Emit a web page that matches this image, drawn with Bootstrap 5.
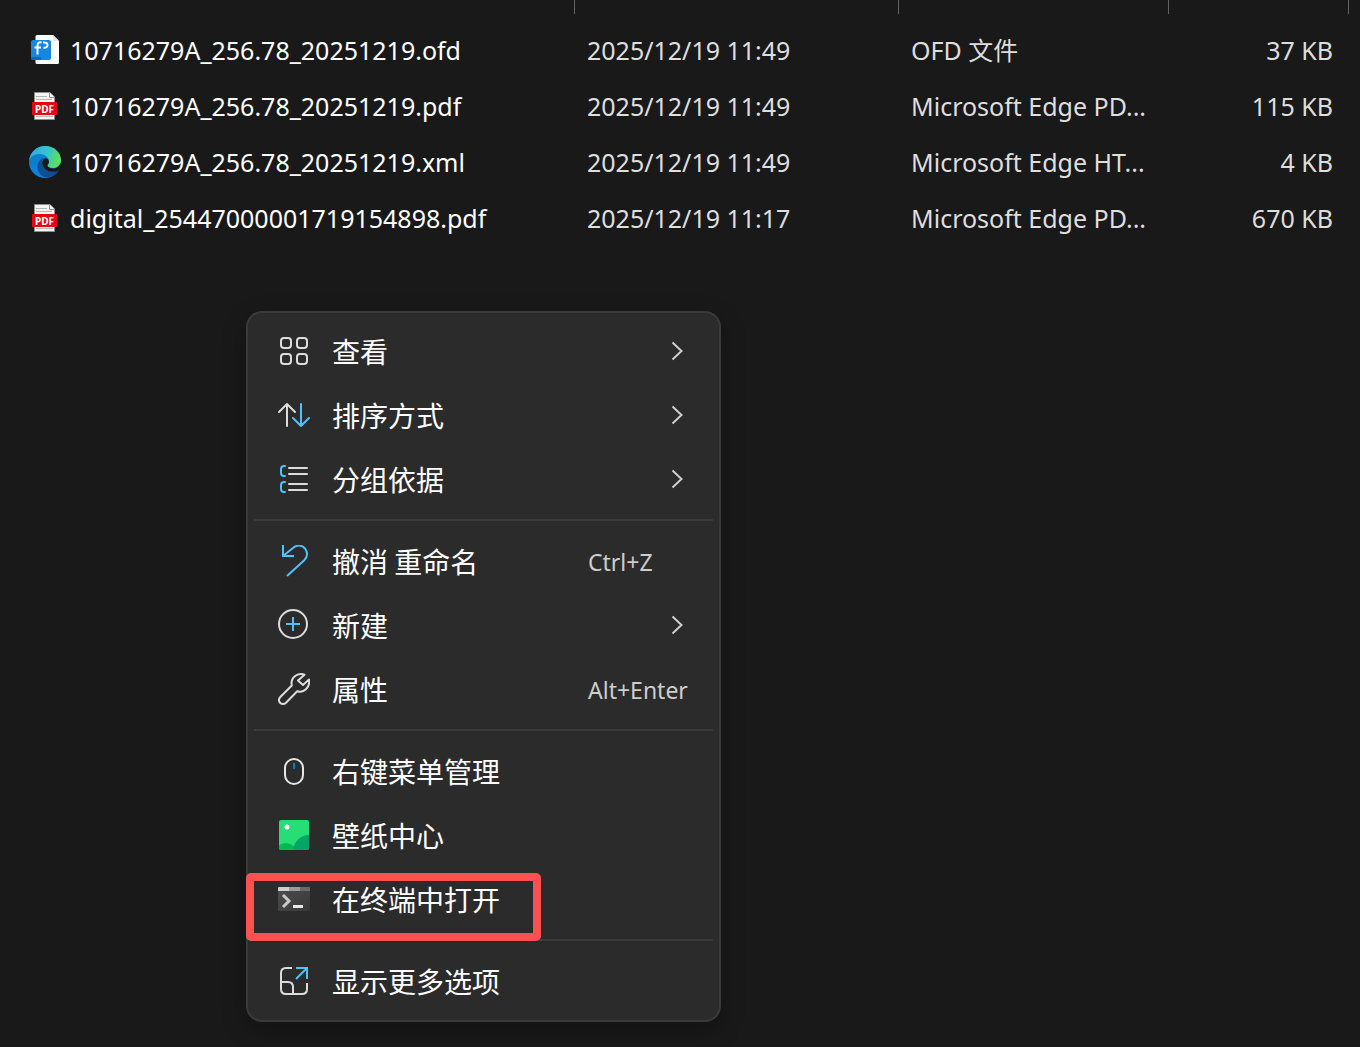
<!DOCTYPE html>
<html lang="zh-CN" data-bs-theme="dark">
<head>
<meta charset="utf-8">
<meta name="viewport" content="width=device-width, initial-scale=1">
<title>文件资源管理器</title>
<link href="https://cdn.jsdelivr.net/npm/bootstrap@5.3.0/dist/css/bootstrap.min.css" rel="stylesheet">
<style>
  body {
    background: #191919;
    color: #fff;
    font-family: "Noto Sans", "Noto Sans CJK SC", sans-serif;
    min-height: 100vh;
  }
  /* File list */
  .file-list { table-layout: fixed; font-size: 25px; line-height: 32px; color: #dedede; }
  .file-list th { height: 22px; padding: 0; vertical-align: top; }
  .file-list th .divider { display: block; height: 14px; border-right: 1px solid #636363; }
  .file-list td { height: 56px; padding: 0 16px 0 12px; vertical-align: middle; }
  .file-list td:first-child { padding-left: 28px; color: #fff; }
  .col-date { width: 324px; }
  .col-type { width: 270px; }
  .col-size { width: 180px; }
  .col-rest { width: 11px; }
  .file-icon { width: 34px; height: 34px; flex: none; }

  /* Context menu */
  .context-menu {
    left: 246px;
    top: 311px;
    width: 475px;
    padding: 6px 6px 7px;
    background: #2b2b2b;
    border: 2px solid #3a3a3a;
    border-radius: 16px;
    box-shadow: 0 8px 24px rgba(0, 0, 0, .28);
  }
  .menu-entry {
    display: grid;
    grid-template-columns: 32px 1fr 125px;
    column-gap: 22px;
    align-items: center;
    width: 100%;
    height: 64px;
    padding: 0 0 0 24px;
    border: 0;
    background: transparent;
    color: #fff;
    font-family: "Noto Sans CJK SC", "Noto Sans", sans-serif;
    font-size: 28px;
    line-height: 40px;
    text-align: left;
    white-space: nowrap;
  }
  .menu-entry svg { display: block; }
  .menu-entry:hover { background: #353535; }
  .menu-line { height: 2px; margin: 8px 0; background: #3b3b3b; }
  .shortcut { padding-top: 2px; font-family: "Noto Sans", sans-serif; font-size: 23px; color: #cdcdcd; }
  .chevron { margin-left: 83px; }
  .highlight-frame {
    left: -8px;
    top: 6px;
    width: 295px;
    height: 68px;
    border: 8px solid #fa5151;
    border-radius: 5px;
    pointer-events: none;
  }
</style>
</head>
<body>

<svg width="0" height="0" class="position-absolute" aria-hidden="true">
  <defs>
    <linearGradient id="edgeTop" x1="0" y1="0.3" x2="1" y2="0.6">
      <stop offset="0" stop-color="#2fa8e6"/><stop offset=".5" stop-color="#31c6cf"/><stop offset="1" stop-color="#66e04e"/>
    </linearGradient>
    <linearGradient id="edgeLeft" x1="0" y1="0" x2=".4" y2="1">
      <stop offset="0" stop-color="#1277c4"/><stop offset="1" stop-color="#0a84e0"/>
    </linearGradient>
    <linearGradient id="edgeDark" x1="0" y1="0" x2="1" y2=".5">
      <stop offset="0" stop-color="#0c5296"/><stop offset="1" stop-color="#134b93"/>
    </linearGradient>
    <linearGradient id="termBody" x1="0" y1="0" x2="1" y2="1">
      <stop offset="0" stop-color="#4e4e4e"/><stop offset="1" stop-color="#383838"/>
    </linearGradient>
    <symbol id="pdf" viewBox="0 0 34 34">
      <path d="M6.5 3.5H22L26.500 8V30.500H6.500Z" fill="#f4f4f4" stroke="#8f8f8f"/>
      <path d="M21.500 3.500V8.500H26.500" fill="#fff" stroke="#8f8f8f"/>
      <path d="M8 7.500H19M8 10.500H24M8 27.500H25" stroke="#b5b5b5"/>
      <rect x="4" y="13" width="25" height="13" fill="#e00713"/>
      <text x="16.500" y="23.500" text-anchor="middle" font-family="Noto Sans, sans-serif" font-size="10" font-weight="700" fill="#fff">PDF</text>
    </symbol>
    <symbol id="chev" viewBox="0 0 14 20">
      <path d="M1.500 1.500L10.500 10L1.500 18.500" fill="none" stroke="#cfcfcf" stroke-width="2"/>
    </symbol>
  </defs>
</svg>

<main>
  <table class="file-list w-100">
    <colgroup><col><col class="col-date"><col class="col-type"><col class="col-size"><col class="col-rest"></colgroup>
    <thead>
      <tr>
        <th scope="col" aria-label="名称"><span class="divider"></span></th>
        <th scope="col" aria-label="修改日期"><span class="divider"></span></th>
        <th scope="col" aria-label="类型"><span class="divider"></span></th>
        <th scope="col" aria-label="大小"><span class="divider"></span></th>
        <th></th>
      </tr>
    </thead>
    <tbody>
      <tr>
        <td><div class="d-flex align-items-center gap-2">
          <svg class="file-icon" viewBox="0 0 34 34" aria-hidden="true">
            <path d="M9 2H25L31 8V29.500Q31 31 29.500 31H9Q7.500 31 7.500 29.500V3.500Q7.500 2 9 2Z" fill="#fff"/>
            <path d="M25 2L31 8H26Q25 8 25 7Z" fill="#e4e8ee"/>
            <rect x="3" y="7" width="20" height="20" rx="2" fill="#1687e0"/>
            <path d="M3 24H13V27H5Q3 27 3 25Z" fill="#0b6cbf"/>
            <path d="M13.500 9.500Q9.500 8.500 9.500 13V21.500M6.500 14.500H13M15 9.500Q19.500 9 19.500 12Q19.500 15 15.500 14.800" fill="none" stroke="#fff" stroke-width="2"/>
          </svg>
          <span class="text-nowrap">10716279A_256.78_20251219.ofd</span></div></td>
        <td class="text-nowrap">2025/12/19 11:49</td>
        <td class="text-truncate">OFD 文件</td>
        <td class="text-end">37 KB</td><td class="p-0"></td>
      </tr>
      <tr>
        <td><div class="d-flex align-items-center gap-2">
          <svg class="file-icon" aria-hidden="true"><use href="#pdf"/></svg>
          <span class="text-nowrap">10716279A_256.78_20251219.pdf</span></div></td>
        <td class="text-nowrap">2025/12/19 11:49</td>
        <td class="text-truncate">Microsoft Edge PD...</td>
        <td class="text-end">115 KB</td><td class="p-0"></td>
      </tr>
      <tr>
        <td><div class="d-flex align-items-center gap-2">
          <svg class="file-icon" viewBox="0 0 34 34" aria-hidden="true">
            <circle cx="17" cy="17" r="16" fill="url(#edgeLeft)"/>
            <path d="M1 16C2 7 9 1 17 1C27 1 33 8 33 15C33 20 29 23 25 23C22 23 19.500 22 19.500 20.500C19.500 19.500 21 18.500 21 16.500C21 12 16.500 9 11.500 9C6 9 2 12 1 16Z" fill="url(#edgeTop)"/>
            <path d="M15 13C11 15 9.500 18.500 9.500 21.500C9.500 27 13 32 19.500 32.800C24 32 28.500 29 31 25.500C31.300 24.800 30.800 24.500 30 24.900C28 26 26 26.500 24 26.500C18.500 26.500 14 22.500 14 18C14 16 14.500 14.200 16 13Z" fill="url(#edgeDark)"/>
            <path d="M31 25.200C27 28 18.500 27.500 15 21.500C13.500 18.500 14 15 17 13.300C19.500 13.300 21 15 21 16.800C21 18.500 19.500 19.500 19.500 20.600C19.500 22 22 23.500 25 23.500C28 23.500 31 22 32.500 18L34 24Z" fill="#191919"/>
          </svg>
          <span class="text-nowrap">10716279A_256.78_20251219.xml</span></div></td>
        <td class="text-nowrap">2025/12/19 11:49</td>
        <td class="text-truncate">Microsoft Edge HT...</td>
        <td class="text-end">4 KB</td><td class="p-0"></td>
      </tr>
      <tr>
        <td><div class="d-flex align-items-center gap-2">
          <svg class="file-icon" aria-hidden="true"><use href="#pdf"/></svg>
          <span class="text-nowrap">digital_25447000001719154898.pdf</span></div></td>
        <td class="text-nowrap">2025/12/19 11:17</td>
        <td class="text-truncate">Microsoft Edge PD...</td>
        <td class="text-end">670 KB</td><td class="p-0"></td>
      </tr>
    </tbody>
  </table>
</main>

<nav class="context-menu position-absolute" aria-label="右键菜单">
  <button type="button" class="menu-entry">
    <svg width="32" height="32" viewBox="0 0 32 32" fill="none" stroke="#dcdcdc" stroke-width="2"><rect x="3" y="3" width="10" height="10" rx="3"/><rect x="19" y="3" width="10" height="10" rx="3"/><rect x="3" y="19" width="10" height="10" rx="3"/><rect x="19" y="19" width="10" height="10" rx="3"/></svg>
    <span>查看</span>
    <svg class="chevron" width="14" height="20"><use href="#chev"/></svg>
  </button>
  <button type="button" class="menu-entry">
    <svg width="32" height="32" viewBox="0 0 32 32" fill="none" stroke-width="2" stroke-linecap="round" stroke-linejoin="round"><path d="M9 27V5M1 13L9 5L17 13" stroke="#dcdcdc"/><path d="M16 18L23 27L31 19" stroke="#2b2b2b" stroke-width="5"/><path d="M23 5V27M15 19L23 27L31 19" stroke="#4cc2ff"/></svg>
    <span>排序方式</span>
    <svg class="chevron" width="14" height="20"><use href="#chev"/></svg>
  </button>
  <button type="button" class="menu-entry">
    <svg width="32" height="32" viewBox="0 0 32 32" fill="none" stroke-width="2" stroke-linecap="round"><path d="M7 3H6Q3 3 3 6V10Q3 13 6 13H7M7 19H6Q3 19 3 22V26Q3 29 6 29H7" stroke="#4cc2ff"/><path d="M11 5H29M11 11H29M11 21H29M11 27H29" stroke="#dcdcdc"/></svg>
    <span>分组依据</span>
    <svg class="chevron" width="14" height="20"><use href="#chev"/></svg>
  </button>
  <div class="menu-line"></div>
  <button type="button" class="menu-entry">
    <svg width="32" height="32" viewBox="0 0 32 32" fill="none" stroke="#4cc2ff" stroke-width="2"><path d="M5 0V11H16M5 11L15 3C19 -.5 24 0 27 3.500C30 7.500 29.500 12 26 15.500L9 31"/></svg>
    <span>撤消 重命名</span>
    <span class="shortcut">Ctrl+Z</span>
  </button>
  <button type="button" class="menu-entry">
    <svg width="32" height="32" viewBox="0 0 32 32" fill="none" stroke-width="2"><circle cx="15" cy="15" r="14" stroke="#dcdcdc"/><path d="M15 8V22M8 15H22" stroke="#4cc2ff"/></svg>
    <span>新建</span>
    <svg class="chevron" width="14" height="20"><use href="#chev"/></svg>
  </button>
  <button type="button" class="menu-entry">
    <svg width="32" height="32" viewBox="0 0 32 32" fill="none" stroke="#dcdcdc" stroke-width="2" stroke-linejoin="round"><path d="M26.500 1.700C21 -.5 14 3 13.500 9.500C13.500 10.500 13.600 11.500 13.800 12.500L2.300 24C-.5 27 1.500 31 5 31C6.200 31 7.200 30.500 8 29.700L19.200 18.300C26 20.500 32.500 14 31 6.500L25 12L20 7.500Z"/></svg>
    <span>属性</span>
    <span class="shortcut">Alt+Enter</span>
  </button>
  <div class="menu-line"></div>
  <button type="button" class="menu-entry">
    <svg width="32" height="32" viewBox="0 0 32 32" fill="none" stroke-width="2"><rect x="7" y="4" width="18" height="25" rx="9" stroke="#e6e6e6"/><path d="M16 8V14" stroke="#0b75d0"/></svg>
    <span>右键菜单管理</span>
  </button>
  <button type="button" class="menu-entry">
    <svg width="32" height="32" viewBox="0 0 32 32"><defs><clipPath id="wall"><rect x="1" y="1" width="30" height="30" rx="2"/></clipPath></defs><g clip-path="url(#wall)"><rect width="32" height="32" fill="#27dd76"/><ellipse cx="8" cy="33" rx="10" ry="9" fill="#05b94f"/><circle cx="31" cy="32" r="16" fill="#04a566"/><circle cx="9" cy="8" r="2.500" fill="#fff"/></g></svg>
    <span>壁纸中心</span>
  </button>
  <button type="button" class="menu-entry position-relative">
    <svg width="32" height="32" viewBox="0 0 32 32"><rect x="0" y="4" width="32" height="24" rx="1.500" fill="url(#termBody)"/><path d="M0 8V5Q0 4 1 4H11V8Z" fill="#cfcfcf"/><path d="M11 4H22V8H11Z" fill="#9b9b9b"/><path d="M22 4H31Q32 4 32 5V8H22Z" fill="#6a6a6a"/><path d="M5 12L11 18L5 24" fill="none" stroke="#c9c9c9" stroke-width="3"/><path d="M15 23.500H25" stroke="#e8e8e8" stroke-width="3"/></svg>
    <span>在终端中打开</span>
    <span class="highlight-frame position-absolute"></span>
  </button>
  <div class="menu-line"></div>
  <button type="button" class="menu-entry">
    <svg width="32" height="32" viewBox="0 0 32 32" fill="none" stroke-width="2"><path d="M14 3H8Q3 3 3 8V24Q3 29 8 29H24Q29 29 29 24V18M3 17H10Q15 17 15 22V29" stroke="#dcdcdc"/><path d="M18 3H29V14M28.500 3.500L18 14" stroke="#4cc2ff"/></svg>
    <span>显示更多选项</span>
  </button>
</nav>

<script src="https://cdn.jsdelivr.net/npm/bootstrap@5.3.0/dist/js/bootstrap.bundle.min.js"></script>
</body>
</html>
